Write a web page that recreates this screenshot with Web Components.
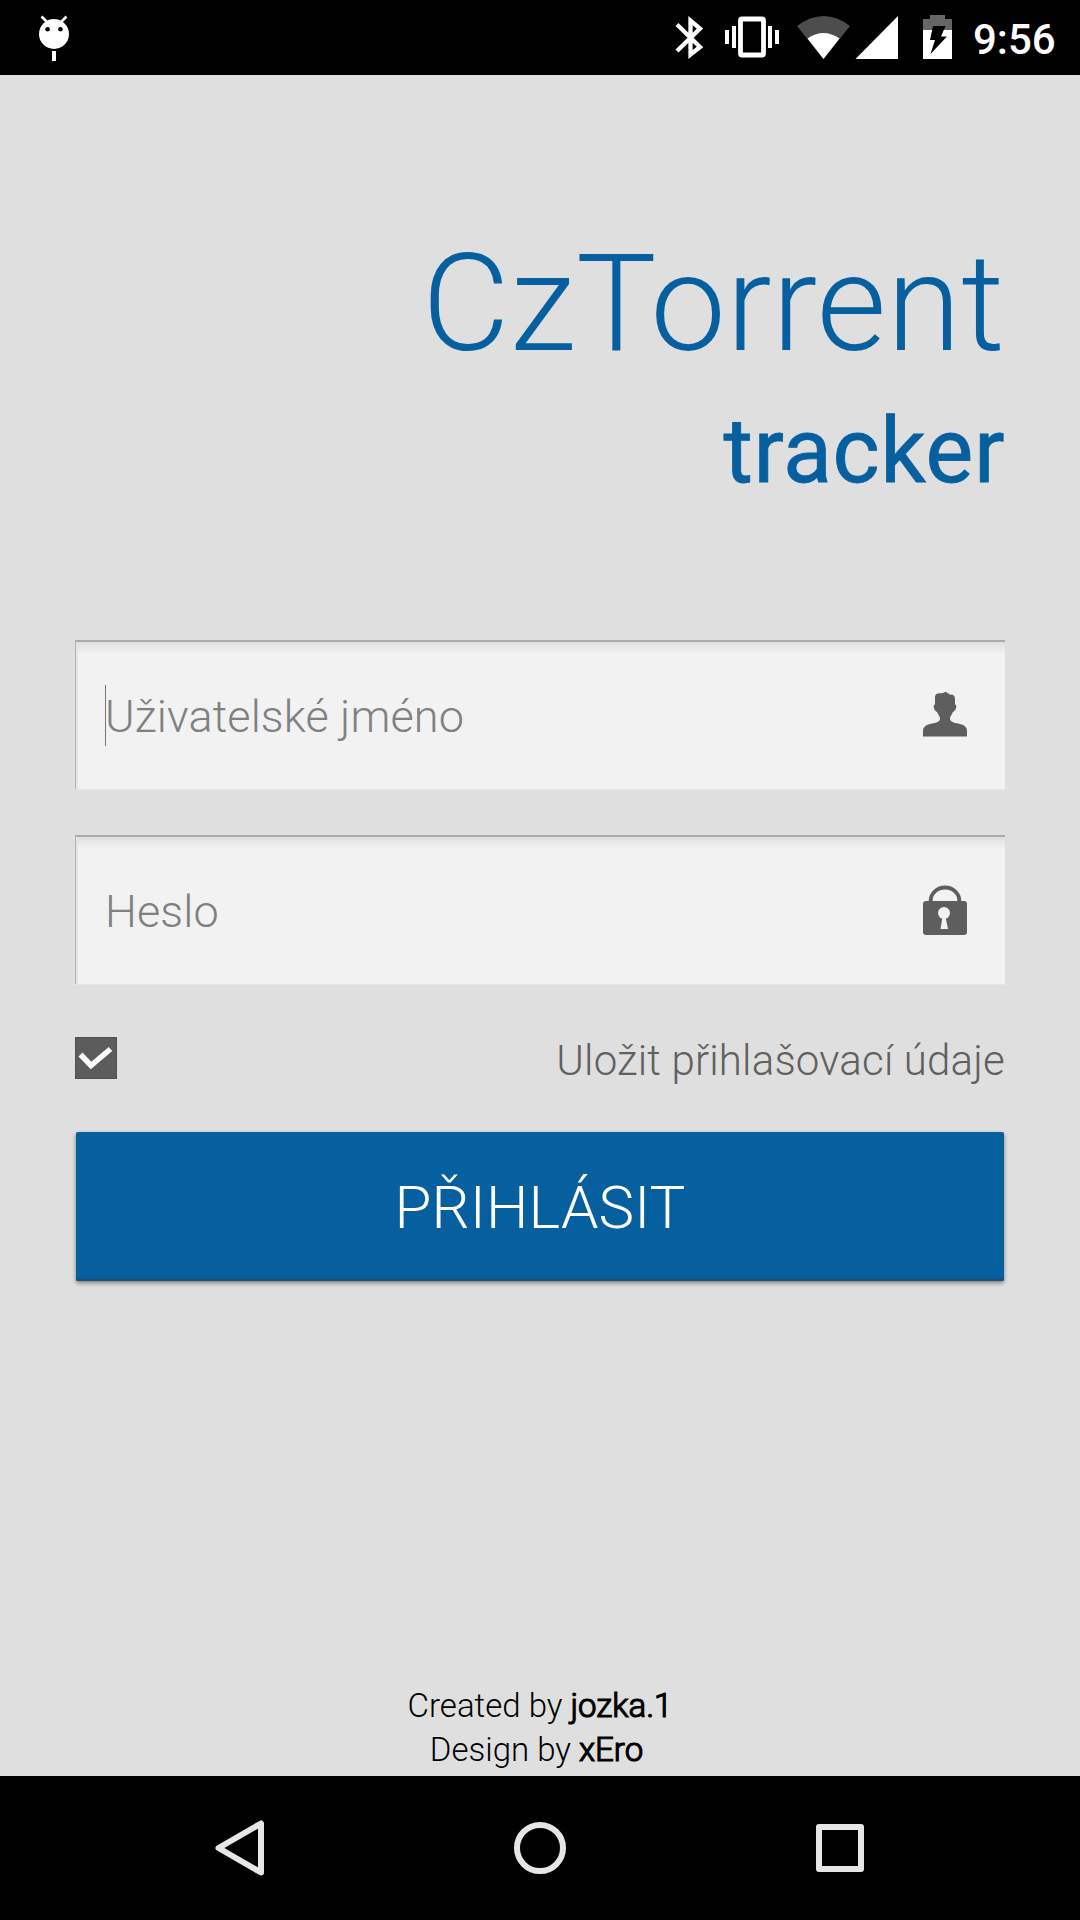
<!DOCTYPE html>
<html lang="cs">
<head>
<meta charset="utf-8">
<title>CzTorrent tracker</title>
<style>
  body {
    margin: 0;
    background: #dfdfdf;
    font-family: Roboto, "Liberation Sans", sans-serif;
  }
</style>
</head>
<body>
<login-screen></login-screen>

<script>
class StatusBar extends HTMLElement {
  constructor() {
    super();

    const shadow = this.attachShadow({ mode: "open" });

    shadow.innerHTML = `
      <style>
        :host {
          display: flex;
          justify-content: space-between;
          height: 75px;
          background: #000;
          color: #fff;
        }

        svg {
          display: block;
          height: 75px;
        }

        .right {
          display: flex;
        }

        .clock {
          width: 107px;
          font-size: 42px;
          font-weight: 500;
          line-height: 79px;
          white-space: nowrap;
        }
      </style>

      <svg width="120" viewBox="0 0 120 75">
        <path d="M41.5 16.5l5 5M66.500 16.500l-5 5" stroke="#fff" stroke-width="2.600"/>
        <circle cx="54" cy="34" r="15" fill="#fff"/>
        <circle cx="47.600" cy="29.300" r="2.300"/>
        <circle cx="60.400" cy="29.300" r="2.300"/>
        <path d="M52 51h4v10h-4z" fill="#fff"/>
      </svg>

      <div class="right">
        <svg width="313" viewBox="660 0 313 75" fill="#fff">
          <g fill="none" stroke="#fff">
            <path d="M677 24.500l23 22.500L690.500 54.500V20.500l9.500 8L677 51" stroke-width="4.300"/>
            <rect x="740.500" y="19" width="23" height="36" rx="1.500" stroke-width="4.800"/>
          </g>
          <path d="M725 30h4v14h-4zM732 26h4v22h-4zM768 26h4v22h-4zM775 30h4v14h-4z"/>
          <path d="M797 26Q823.500 6 850 26L823.500 59z" fill="#4d4d4d"/>
          <path d="M807.500 38.500Q823.500 27.500 839.500 38.500L823.500 59z"/>
          <path d="M898 16v43h-42.500z"/>
          <path d="M923 30v-11h7v-4h15v4h7v11z" fill="#666"/>
          <path d="M923 30h29v29h-29z"/>
          <path d="M933 26h12.500l-4.500 10.500h6L930.500 54l4.500-14h-5z" fill="#000"/>
        </svg>
        <div class="clock"><slot></slot></div>
      </div>
    `;
  }
}

class AppTitle extends HTMLElement {
  constructor() {
    super();

    const shadow = this.attachShadow({ mode: "open" });

    shadow.innerHTML = `
      <style>
        :host {
          display: flex;
          flex-direction: column;
          align-items: flex-end;
          gap: 16px;
          color: #065f9e;
          white-space: nowrap;
        }

        .name {
          font-size: 135px;
          font-weight: 300;
          line-height: 158px;
          letter-spacing: 0.3px;
        }

        .sub {
          font-size: 90px;
          font-weight: 400;
          line-height: 106px;
          letter-spacing: 0.6px;
          -webkit-text-stroke: 0.8px #065f9e;
        }
      </style>

      <div class="name"><slot></slot></div>
      <div class="sub"><slot name="sub"></slot></div>
    `;
  }
}

class TextField extends HTMLElement {
  constructor() {
    super();

    const shadow = this.attachShadow({ mode: "open" });

    shadow.innerHTML = `
      <style>
        :host {
          box-sizing: border-box;
          display: flex;
          align-items: center;
          justify-content: space-between;
          height: 149px;
          padding: 0 38px 0 30px;
          border-left: 1px solid #b4b4b4;
          border-top: 2px solid #a9acab;
          background: linear-gradient(#dcdcdc, #e6e6e6 4px, #f2f2f2 12px);
          box-shadow: inset 2px 0 1px #e4e4e4, 0 1px 0 #e6e6e6;
        }

        .hint {
          box-sizing: border-box;
          height: 61px;
          font-size: 45px;
          font-weight: 300;
          line-height: 60px;
          letter-spacing: 0.12px;
          color: #808080;
          white-space: nowrap;
        }

        :host([focused]) .hint {
          box-shadow: -1px 0 0 #777;
        }

        .text {
          display: block;
          margin-left: -1px;
          padding-top: 2px;
        }
      </style>

      <div class="hint"><span class="text"><slot></slot></span></div>
      <slot name="icon"></slot>
    `;
  }
}

class UserIcon extends HTMLElement {
  constructor() {
    super();

    this.attachShadow({ mode: "open" }).innerHTML = `
      <style>
        :host, svg { display: block; }
        :host { padding-bottom: 4px; }
      </style>
      <svg width="44" height="50" viewBox="0 0 44 50" fill="#5e5e5e">
        <path d="M0 47.500V42c0-4 3-6.500 8-7.300 6-1 9-2.200 9-5.200 0-2-1.500-3.500-3-6.500-2-.8-3.300-3.500-3.300-5.500 0-1.200.4-2 1.300-2V8.500C12 5 14 4.300 17 4.200c2 0 4-.3 5-1.200 2-.3 2 .4 2.500 1.500l.9-.3 1.200 1.300c4-.4 5.400 1.300 5.400 5v5c.9 0 1.300.8 1.300 2 0 2-1.300 4.700-3.300 5.500-1.500 3-3 4.500-3 6.500 0 3 3 4.200 9 5.200 5 .8 8 3.300 8 7.300v5.500z"/>
      </svg>
    `;
  }
}

class LockIcon extends HTMLElement {
  constructor() {
    super();

    this.attachShadow({ mode: "open" }).innerHTML = `
      <style>
        :host, svg { display: block; }
        :host { padding-bottom: 2px; }
      </style>
      <svg width="44" height="50" viewBox="0 0 44 50">
        <path d="M7.700 18v-2.500a14.300 13 0 0 1 28.600 0V18" fill="none" stroke="#5e5e5e" stroke-width="3.800"/>
        <rect y="16" width="44" height="34" rx="3" fill="#5e5e5e"/>
        <circle cx="21" cy="28" r="6" fill="#f1f1f1"/>
        <path d="M19.500 32h3l2.500 12h-7.500z" fill="#f1f1f1"/>
      </svg>
    `;
  }
}

class CheckRow extends HTMLElement {
  constructor() {
    super();

    const shadow = this.attachShadow({ mode: "open" });

    shadow.innerHTML = `
      <style>
        :host {
          display: flex;
          align-items: center;
          justify-content: space-between;
          height: 42px;
        }

        .label {
          padding-top: 5px;
          font-size: 42px;
          font-weight: 300;
          line-height: 50px;
          letter-spacing: 0.18px;
          color: #606060;
          white-space: nowrap;
        }
      </style>

      <svg width="42" height="42" viewBox="0 0 42 42">
        <rect width="42" height="42" fill="#5c5c5c"/>
        <rect x=".5" y=".5" width="41" height="41" fill="none" stroke="#505050"/>
        <path d="M5.500 17.500L16 28.500 35.500 12" fill="none" stroke="#fff" stroke-width="5.500"/>
      </svg>
      <div class="label"><slot></slot></div>
    `;
  }
}

class PrimaryButton extends HTMLElement {
  constructor() {
    super();

    const shadow = this.attachShadow({ mode: "open" });

    shadow.innerHTML = `
      <style>
        :host {
          box-sizing: border-box;
          display: flex;
          align-items: center;
          justify-content: center;
          height: 149px;
          margin: 0 1px;
          padding-top: 2px;
          border-radius: 2px;
          background: #065f9e;
          box-shadow: inset 0 -2px 1px #1f4c70, 0 2px 4px rgba(0, 0, 0, 0.45);
          color: #fff;
          font-size: 60px;
          font-weight: 300;
          line-height: 70px;
          letter-spacing: 0.15px;
        }
      </style>

      <span><slot></slot></span>
    `;
  }
}

class AppCredits extends HTMLElement {
  constructor() {
    super();

    const shadow = this.attachShadow({ mode: "open" });

    shadow.innerHTML = `
      <style>
        :host {
          display: block;
          font-size: 33px;
          font-weight: 300;
          line-height: 44px;
          text-align: center;
          color: #000;
        }

        ::slotted(p) {
          margin: 0;
        }
      </style>

      <slot></slot>
    `;
  }
}

class NavBar extends HTMLElement {
  constructor() {
    super();

    const shadow = this.attachShadow({ mode: "open" });

    shadow.innerHTML = `
      <style>
        :host {
          display: flex;
          align-items: center;
          justify-content: center;
          gap: 240px;
          height: 144px;
          background: #000;
        }

        svg {
          fill: none;
          stroke: #e6e6e6;
          stroke-width: 6;
          stroke-linejoin: round;
        }
      </style>

      <svg width="60" height="60" viewBox="0 0 60 60"><path d="M8.500 30L51 5.500v49z"/></svg>
      <svg width="60" height="60" viewBox="0 0 60 60"><circle cx="30" cy="30" r="23"/></svg>
      <svg width="60" height="60" viewBox="0 0 60 60"><rect x="9" y="9" width="42" height="42"/></svg>
    `;
  }
}

class LoginScreen extends HTMLElement {
  constructor() {
    super();

    const shadow = this.attachShadow({ mode: "open" });

    shadow.innerHTML = `
      <style>
        :host {
          display: flex;
          flex-direction: column;
          height: 1920px;
          overflow: hidden;
        }

        main {
          box-sizing: border-box;
          flex: 1;
          display: flex;
          flex-direction: column;
          padding: 150px 75px 4px;
        }

        form {
          display: flex;
          flex-direction: column;
          margin-top: 135px;
        }

        text-field {
          margin-bottom: 46px;
        }

        check-row {
          margin: 7px 0 53px;
        }

        app-credits {
          margin-top: auto;
        }

        .design {
          padding-right: 7px;
        }

        b {
          font-weight: 300;
          -webkit-text-stroke: 1.2px #000;
        }
      </style>

      <status-bar>9:56</status-bar>
      <main>
        <app-title>CzTorrent<span slot="sub">tracker</span></app-title>
        <form>
          <text-field focused>Uživatelské jméno<user-icon slot="icon"></user-icon></text-field>
          <text-field>Heslo<lock-icon slot="icon"></lock-icon></text-field>
          <check-row>Uložit přihlašovací údaje</check-row>
          <primary-button>PŘIHLÁSIT</primary-button>
        </form>
        <app-credits>
          <p>Created by <b>jozka.1</b></p>
          <p class="design">Design by <b>xEro</b></p>
        </app-credits>
      </main>
      <nav-bar></nav-bar>
    `;
  }
}

customElements.define("status-bar", StatusBar);
customElements.define("app-title", AppTitle);
customElements.define("text-field", TextField);
customElements.define("user-icon", UserIcon);
customElements.define("lock-icon", LockIcon);
customElements.define("check-row", CheckRow);
customElements.define("primary-button", PrimaryButton);
customElements.define("app-credits", AppCredits);
customElements.define("nav-bar", NavBar);
customElements.define("login-screen", LoginScreen);
</script>
</body>
</html>
